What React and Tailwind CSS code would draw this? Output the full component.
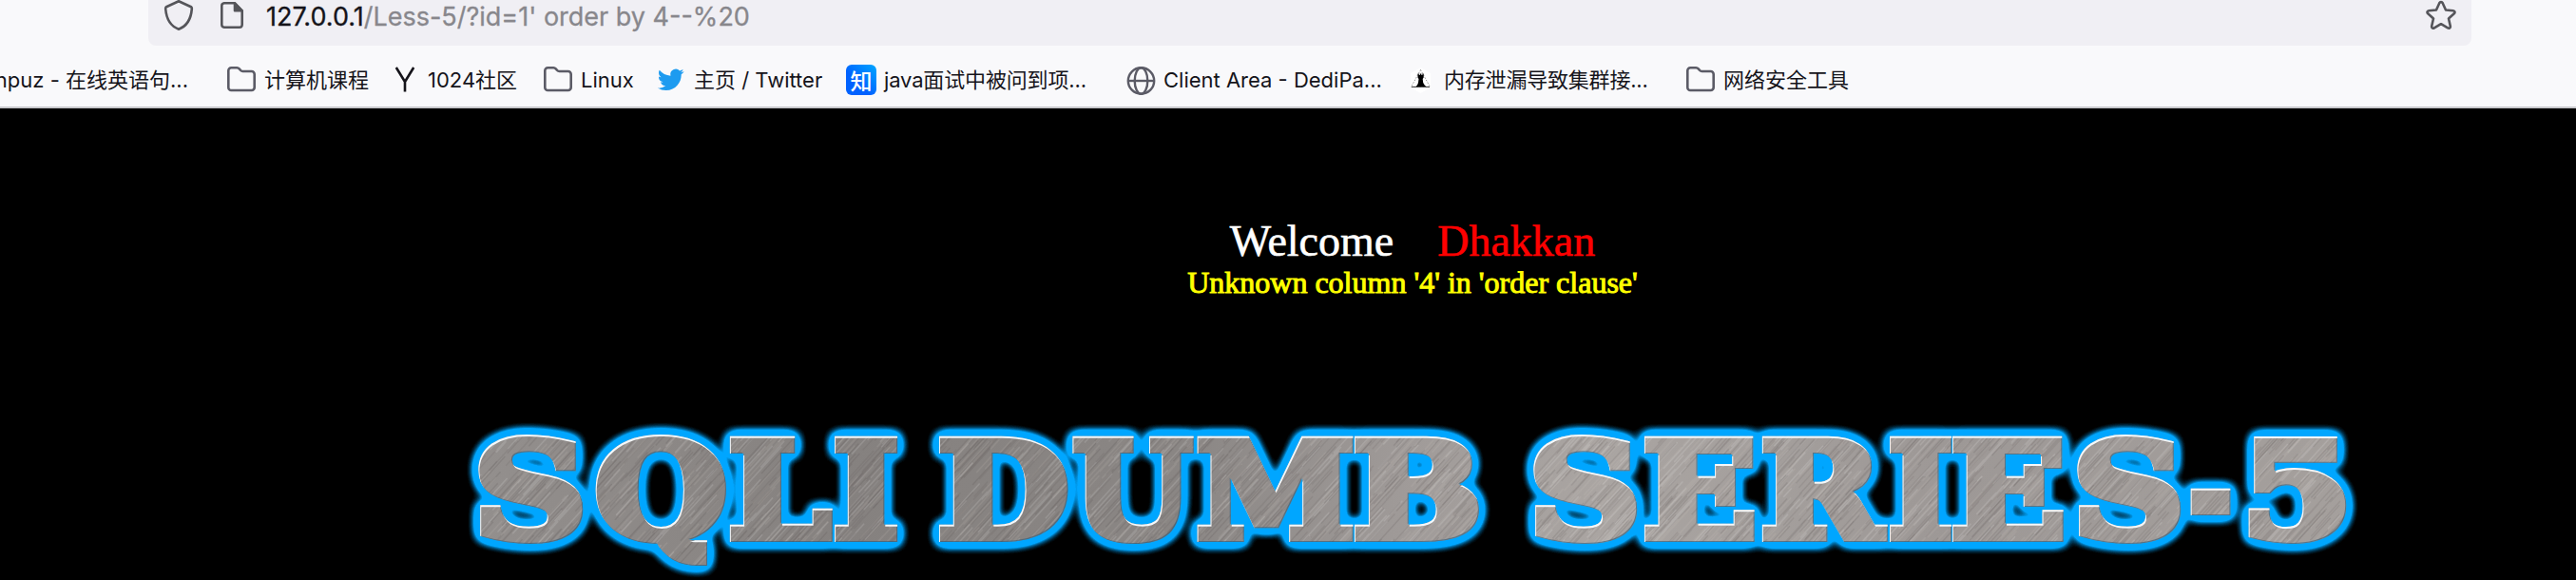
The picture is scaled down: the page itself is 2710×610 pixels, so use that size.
const STROKE = 10;
const SIZE = 138;

// character, advance, ink left, ink right (per em), drawn left edge, drawn right edge
const LETTERS = [
  ["S", 0.722, 0.063, 0.672, 503, 615],
  ["Q", 0.871, 0.031, 0.828, 625, 764],
  ["L", 0.703, 0.047, 0.688, 768, 877],
  ["I", 0.468, 0.047, 0.422, 878, 944],
  ["D", 0.867, 0.047, 0.828, 988, 1124],
  ["U", 0.872, 0.031, 0.859, 1128, 1257],
  ["M", 1.107, 0.031, 1.063, 1258, 1424],
  ["B", 0.845, 0.047, 0.797, 1425, 1557],
  ["S", 0.722, 0.063, 0.672, 1613, 1724],
  ["E", 0.762, 0.047, 0.719, 1730, 1847],
  ["R", 0.831, 0.047, 0.844, 1854, 1987],
  ["I", 0.468, 0.047, 0.422, 1988, 2053],
  ["E", 0.762, 0.047, 0.719, 2054, 2172],
  ["S", 0.722, 0.063, 0.672, 2185, 2296],
  ["-", 0.415, 0.047, 0.375, 2304, 2348],
  ["5", 0.696, 0.078, 0.625, 2365, 2469],
].map(([ch, adv, l, r, x0, x1]) => {
  const unit = (x1 - x0) / (r - l + STROKE / SIZE);
  return { ch, x: x0 + (STROKE / SIZE / 2) * unit - l * unit, len: adv * unit };
});

// Diagonal scratches of the brushed metal
const SCRATCHES = (() => {
  let seed = 7;
  const rnd = () => (seed = (seed * 16807) % 2147483647) / 2147483647;
  const groups = ["", "", "", ""];
  for (let i = 0; i < 3600; i++) {
    const x = 480 + rnd() * 2010;
    const y = rnd() * 200;
    const len = 10 + rnd() * 40;
    groups[i % 4] += `M${x.toFixed(1)} ${y.toFixed(1)}l${len.toFixed(1)} ${(-len * 1.1).toFixed(1)}`;
  }
  return groups;
})();

function Folder() {
  return (
    <svg className="h-8 w-8" viewBox="0 0 32 32" fill="none" stroke="#5b5b66" strokeWidth="2.6" strokeLinejoin="round">
      <path d="M2.3 7V24a3 3 0 0 0 3 3H26.700a3 3 0 0 0 3-3V10a3 3 0 0 0-3-3H17.500c-1 0-1.700-.3-2.300-1L13.700 4.300C13 3.500 12.300 3.200 11.300 3.200H5.300a3 3 0 0 0-3 3Z" />
    </svg>
  );
}
function YIcon() {
  return (
    <svg className="h-8 w-8" viewBox="0 0 32 32" fill="none" stroke="#15141a" strokeWidth="2.6">
      <path d="M6.800 3L16 18L25.200 3M16 17V28.500" />
    </svg>
  );
}
function Bird() {
  return (
    <svg className="h-8 w-8" viewBox="0 0 32 32" fill="#1d9bf0">
      <g transform="translate(1.900 2.100) scale(1.150)">
        <path d="M23.953 4.570a10 10 0 0 1-2.825.775 4.958 4.958 0 0 0 2.163-2.723c-.951.555-2.005.959-3.127 1.184a4.920 4.920 0 0 0-8.384 4.482C7.690 8.095 4.067 6.130 1.640 3.162a4.822 4.822 0 0 0-.666 2.475c0 1.710.870 3.213 2.188 4.096a4.904 4.904 0 0 1-2.228-.616v.060a4.923 4.923 0 0 0 3.946 4.827 4.996 4.996 0 0 1-2.212.085 4.936 4.936 0 0 0 4.604 3.417 9.867 9.867 0 0 1-6.102 2.105c-.390 0-.779-.023-1.170-.067a13.995 13.995 0 0 0 7.557 2.209c9.053 0 13.998-7.496 13.998-13.985 0-.210 0-.420-.015-.630A9.935 9.935 0 0 0 24 4.590z" />
      </g>
    </svg>
  );
}
function Zhi() {
  return (
    <span className="flex h-8 w-8 items-center justify-center rounded-[6px] bg-linear-to-tr from-[#0062ff] from-40% to-[#00a6ff] font-['Noto_Sans_CJK_SC',sans-serif] text-[23px] leading-none font-medium text-white">
      知
    </span>
  );
}
function GlobeIcon() {
  return (
    <svg className="h-8 w-8" viewBox="0 0 32 32" fill="none" stroke="#5b5b66" strokeWidth="2.4">
      <circle cx="16.500" cy="17" r="13.700" />
      <ellipse cx="16.500" cy="17" rx="6.800" ry="13.700" />
      <path d="M3 17H30" />
    </svg>
  );
}
function Castle() {
  return (
    <svg className="h-8 w-8" viewBox="0 0 32 32">
      <path d="M15.500 3L26 9V24L15.500 30L5 24V9Z" fill="#fff" />
      <path d="M15.500 5.500L25.500 23.500H5.500Z" fill="none" stroke="#777" strokeWidth=".8" strokeDasharray="1.500 1.500" />
      <path d="M12.500 9.500h1.300v1.500h1v-1.500h1.600v1.500h1v-1.500h1.300v4l-1 1.500.5 4 1.500 2.500 1.500 1.500H10.500l1.500-1.500 1-2.500.5-4-1-1.500Z" fill="#000" />
      <path d="M6 23.400H25" stroke="#333" strokeWidth="1" />
    </svg>
  );
}

function Bookmark({ icon, label, className = "" }) {
  return (
    <div className={`flex shrink-0 items-center gap-2 ${className}`}>
      {icon}
      <span className="whitespace-nowrap">{label}</span>
    </div>
  );
}

function UrlBar() {
  return (
    <div className="flex h-12 pr-[110px] pl-[156px]">
      <div className="flex flex-1 items-start rounded-b-lg bg-[#f0eff4] pr-4 pl-4">
        <svg className="h-8 w-8 shrink-0" viewBox="0 0 32 32" fill="none" stroke="#55555a" strokeWidth="2.6" strokeLinejoin="round">
          <path d="M16 1.200L29 7.200C29.800 7.700 29.900 8.500 29.800 9.500C29 19 24.500 27.500 16 30.700C7.500 27.500 3 19 2.200 9.500C2.100 8.500 2.200 7.700 3 7.200Z" />
        </svg>
        <svg className="ml-7 h-8 w-6 shrink-0" viewBox="0 0 24 32" fill="none" stroke="#55555a" strokeWidth="2.600" strokeLinejoin="round">
          <path d="M3.800 3.300H15L22.700 11.300V26a2.800 2.800 0 0 1-2.800 2.800H3.800A2.800 2.800 0 0 1 1.300 26V6A2.800 2.800 0 0 1 3.800 3.300Z" />
          <path d="M15 3.300V11.300H22.700Z" fill="#55555a" />
        </svg>
        <div className="ml-6 flex-1 leading-[35px] text-[27px] whitespace-pre">
          <span className="text-[#15141a] [-webkit-text-stroke:0.3px_currentColor]">127.0.0.1</span>
          <span className="text-[#88878c] [-webkit-text-stroke:0.3px_currentColor]">/Less-5/?id=1' order by 4--%20</span>
        </div>
        <svg className="h-8 w-8 shrink-0" viewBox="0 0 32 32" fill="none" stroke="#55555a" strokeWidth="2.600" strokeLinejoin="round">
          <path d="M14.300 3.200C15 1.800 17 1.800 17.700 3.200L21 10.500L28.800 11.200C30.600 11.400 31 13.200 29.800 14.300L24 19.500L25.800 27.500C26.100 29.200 24.500 30.200 23.100 29.400L16 25.200L8.900 29.400C7.500 30.200 5.900 29.200 6.200 27.500L8 19.500L2.200 14.300C1 13.200 1.400 11.400 3.200 11.200L11 10.500Z" />
        </svg>
      </div>
    </div>
  );
}

function BookmarksBar() {
  return (
    <div className="flex h-16 items-start overflow-hidden pt-5 text-[22px] leading-8 text-[#15141a]">
      <div className="flex w-[238px] shrink-0 justify-end pr-[40px] whitespace-nowrap">
        <span>npuz - 在线英语句...</span>
      </div>
      <Bookmark className="w-[172px]" icon={<Folder />} label="计算机课程" />
      <Bookmark className="w-[161px]" icon={<YIcon />} label="1024社区" />
      <Bookmark className="w-[119px]" icon={<Folder />} label="Linux" />
      <Bookmark className="w-[200px]" icon={<Bird />} label="主页 / Twitter" />
      <Bookmark className="w-[294px] tracking-[-0.15px]" icon={<Zhi />} label="java面试中被问到项..." />
      <Bookmark className="w-[295px]" icon={<GlobeIcon />} label="Client Area - DediPa..." />
      <Bookmark className="w-[294px] tracking-[-0.2px]" icon={<Castle />} label="内存泄漏导致集群接..." />
      <Bookmark icon={<Folder />} label="网络安全工具" />
    </div>
  );
}

function Banner() {
  const tones = ["#ffffff", "#3a3633", "#cfc8c4", "#55504d"];
  return (
    <svg className="block h-[180px] w-[2710px]" viewBox="0 0 2710 180">
      <defs>
        <linearGradient id="tone" x1="480" x2="2490" y1="0" y2="0" gradientUnits="userSpaceOnUse">
          <stop offset="0" stopColor="#94908e" />
          <stop offset=".2" stopColor="#85817f" />
          <stop offset=".38" stopColor="#8a8684" />
          <stop offset=".5" stopColor="#a09b99" />
          <stop offset=".6" stopColor="#aaa5a2" />
          <stop offset=".78" stopColor="#9d9896" />
          <stop offset="1" stopColor="#a5a09d" />
        </linearGradient>
        <pattern id="metal" x="0" y="0" width="2710" height="180" patternUnits="userSpaceOnUse">
          <rect width="2710" height="180" fill="url(#tone)" />
          {SCRATCHES.map((d, i) => (
            <path key={i} d={d} stroke={tones[i]} strokeWidth="1.500" strokeOpacity=".13" fill="none" />
          ))}
        </pattern>
        <filter id="bevel" x="440" y="0" width="2090" height="180" filterUnits="userSpaceOnUse" colorInterpolationFilters="sRGB">
          <feGaussianBlur in="SourceAlpha" stdDeviation="6.500" result="b" />
          <feComponentTransfer in="b" result="wide">
            <feFuncA type="linear" slope="7.500" intercept="-.1" />
          </feComponentTransfer>
          <feFlood floodColor="#00a6ff" />
          <feComposite in2="wide" operator="in" result="glow" />
          <feOffset in="SourceAlpha" dx="1.400" dy="1.700" result="down" />
          <feFlood floodColor="#f4f8fa" />
          <feComposite in2="SourceAlpha" operator="in" />
          <feComposite in2="down" operator="out" result="light" />
          <feOffset in="SourceAlpha" dx="-1.200" dy="-1" result="up" />
          <feFlood floodColor="#2c5a78" floodOpacity=".6" />
          <feComposite in2="SourceAlpha" operator="in" />
          <feComposite in2="up" operator="out" result="dark" />
          <feMerge>
            <feMergeNode in="glow" />
            <feMergeNode in="SourceGraphic" />
            <feMergeNode in="dark" />
            <feMergeNode in="light" />
          </feMerge>
        </filter>
      </defs>
      <text
        y="135"
        fontFamily="'DejaVu Serif', serif"
        fontWeight="700"
        fontSize={SIZE}
        fill="url(#metal)"
        stroke="url(#metal)"
        strokeWidth={STROKE}
        filter="url(#bevel)"
      >
        {LETTERS.map((l, i) => (
          <tspan key={i} x={l.x} textLength={l.len} lengthAdjust="spacingAndGlyphs">
            {l.ch}
          </tspan>
        ))}
      </text>
    </svg>
  );
}

export default function App() {
  return (
    <div className="h-[610px] w-[2710px] overflow-hidden bg-black font-[Inter,'Noto_Sans_CJK_SC',sans-serif]">
      <header className="h-[114px] border-b-2 border-[#c9c9cc] bg-[#f9f9fb]">
        <UrlBar />
        <BookmarksBar />
      </header>
      <main className="font-['Liberation_Serif',serif]">
        <div className="pt-[114px] pl-[262px] text-center">
          <div className="text-[46px] leading-[51px] whitespace-pre text-white [-webkit-text-stroke:0.6px_currentColor]">
            Welcome{"    "}
            <span className="text-[#ff0000]">Dhakkan</span>
          </div>
          <div className="text-[32px] leading-9 text-[#ffff00] [-webkit-text-stroke:1px_currentColor]">
            Unknown column '4' in 'order clause'
          </div>
        </div>
        <div className="mt-[115px]">
          <Banner />
        </div>
      </main>
    </div>
  );
}
